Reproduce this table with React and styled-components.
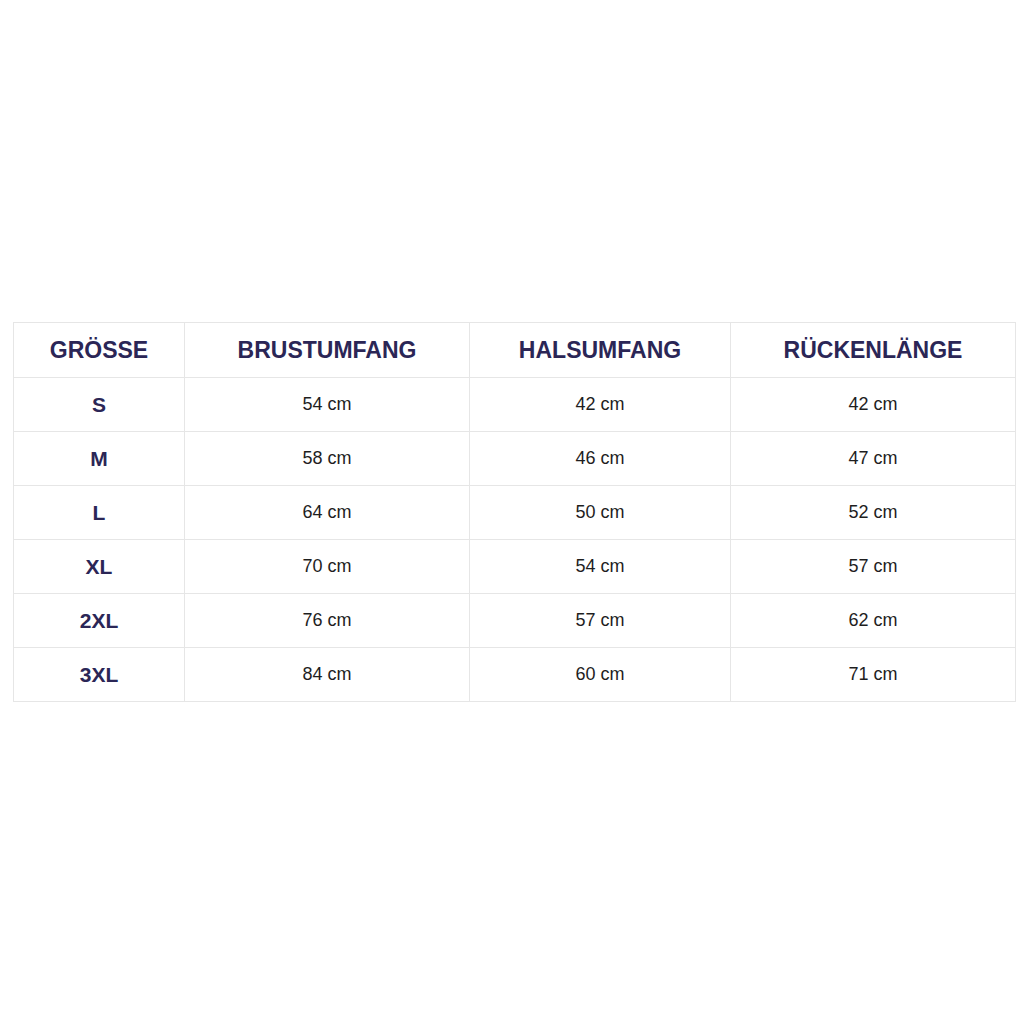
import React from "react";
import styled, { createGlobalStyle } from "styled-components";

const Global = createGlobalStyle`
  html, body { margin: 0; padding: 0; background: #ffffff; }
  body { font-family: "Liberation Sans", Arial, sans-serif; }
`;

const Page = styled.div`
  width: 1024px;
  height: 1024px;
  box-sizing: border-box;
  padding: 322px 9px 0 13px;
`;

const Table = styled.table`
  width: 1002px;
  border-collapse: collapse;
  table-layout: fixed;
  border: 1px solid #e6e6e6;
`;

const HeadCell = styled.th`
  height: 54px;
  padding: 0;
  border: 1px solid #e6e6e6;
  font-size: 23px;
  font-weight: 700;
  color: #2b2656;
  text-align: center;
  vertical-align: middle;
`;

const SizeCell = styled.td`
  height: 53px;
  padding: 0;
  border: 1px solid #e6e6e6;
  font-size: 21px;
  font-weight: 700;
  color: #2b2656;
  text-align: center;
  vertical-align: middle;
`;

const ValueCell = styled.td`
  height: 53px;
  padding: 0;
  border: 1px solid #e6e6e6;
  font-size: 18px;
  color: #1e1e1e;
  text-align: center;
  vertical-align: middle;
`;

const headers = ["GRÖSSE", "BRUSTUMFANG", "HALSUMFANG", "RÜCKENLÄNGE"];
const widths = [171, 285, 261, 285];
const rows = [
  ["S", "54 cm", "42 cm", "42 cm"],
  ["M", "58 cm", "46 cm", "47 cm"],
  ["L", "64 cm", "50 cm", "52 cm"],
  ["XL", "70 cm", "54 cm", "57 cm"],
  ["2XL", "76 cm", "57 cm", "62 cm"],
  ["3XL", "84 cm", "60 cm", "71 cm"],
];

export default function App() {
  return (
    <>
      <Global />
      <Page>
        <Table>
          <colgroup>
            {widths.map((w, i) => (
              <col key={i} style={{ width: w }} />
            ))}
          </colgroup>
          <thead>
            <tr>
              {headers.map((h) => (
                <HeadCell key={h}>{h}</HeadCell>
              ))}
            </tr>
          </thead>
          <tbody>
            {rows.map((r) => (
              <tr key={r[0]}>
                <SizeCell>{r[0]}</SizeCell>
                {r.slice(1).map((v, i) => (
                  <ValueCell key={i}>{v}</ValueCell>
                ))}
              </tr>
            ))}
          </tbody>
        </Table>
      </Page>
    </>
  );
}
